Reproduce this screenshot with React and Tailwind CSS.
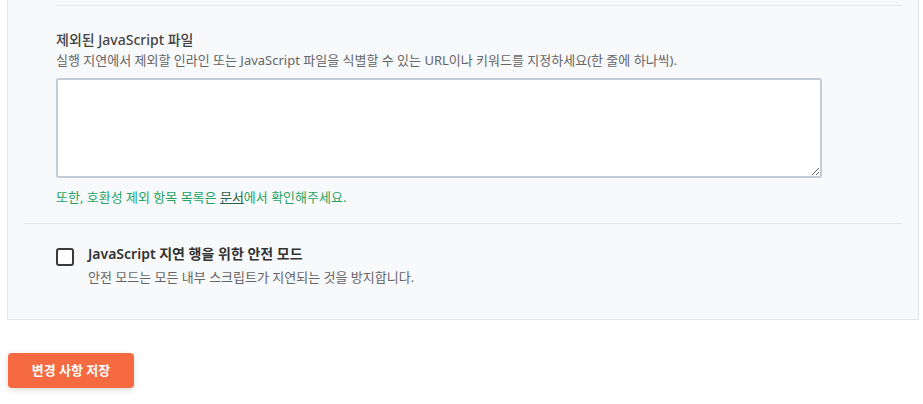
export default function App() {
  return (
    <div
      className="min-h-[404px] bg-white"
      style={{ fontFamily: '"Noto Sans", "Noto Sans CJK KR", sans-serif' }}
    >
      <div className="ml-[7px] w-[912px] border-x border-b border-[#e3e6eb] bg-[#f8f9fb] px-4 pb-[32px]">
        <div className="pl-8">
          <div className="h-[6px] border-b border-[#e3e6eb]"></div>
          <div className="pt-6">
            <h3 className="text-[14px] font-medium leading-5 text-[#444]">
              제외된 JavaScript 파일
            </h3>
            <p className="text-[13px] leading-5 text-[#666]">
              실행 지연에서 제외할 인라인 또는 JavaScript 파일을 식별할 수 있는 URL이나 키워드를 지정하세요(한 줄에 하나씩).
            </p>
            <textarea className="mt-2 block h-[100px] w-[766px] rounded-[3px] border-2 border-[#c5cbd4] bg-white p-2 text-[13px] outline-none"></textarea>
            <p className="mt-[9px] text-[13px] leading-5 text-[#1fa465]">
              또한, 호환성 제외 항목 목록은{" "}
              <a href="#" className="text-[#2d5f4a] underline">
                문서
              </a>
              에서 확인해주세요.
            </p>
          </div>
        </div>
        <div className="mt-4 border-t border-[#e3e6eb] pt-5">
          <label className="flex gap-[14px] pl-8">
            <span className="mt-[4px] block h-[18px] w-[18px] shrink-0 rounded-[3px] border-2 border-[#3a3a3a] bg-white"></span>
            <span>
              <span className="block text-[14px] font-semibold leading-5 text-[#333]">
                JavaScript 지연 행을 위한 안전 모드
              </span>
              <span className="mt-[3px] block text-[13px] leading-5 text-[#666]">
                안전 모드는 모든 내부 스크립트가 지연되는 것을 방지합니다.
              </span>
            </span>
          </label>
        </div>
      </div>
      <button className="ml-2 mt-[33px] h-[35px] w-[126px] rounded-[4px] bg-[#f56a40] text-[13px] font-bold text-white shadow-[0_2px_6px_rgba(0,0,0,0.15)]">
        변경 사항 저장
      </button>
    </div>
  );
}
